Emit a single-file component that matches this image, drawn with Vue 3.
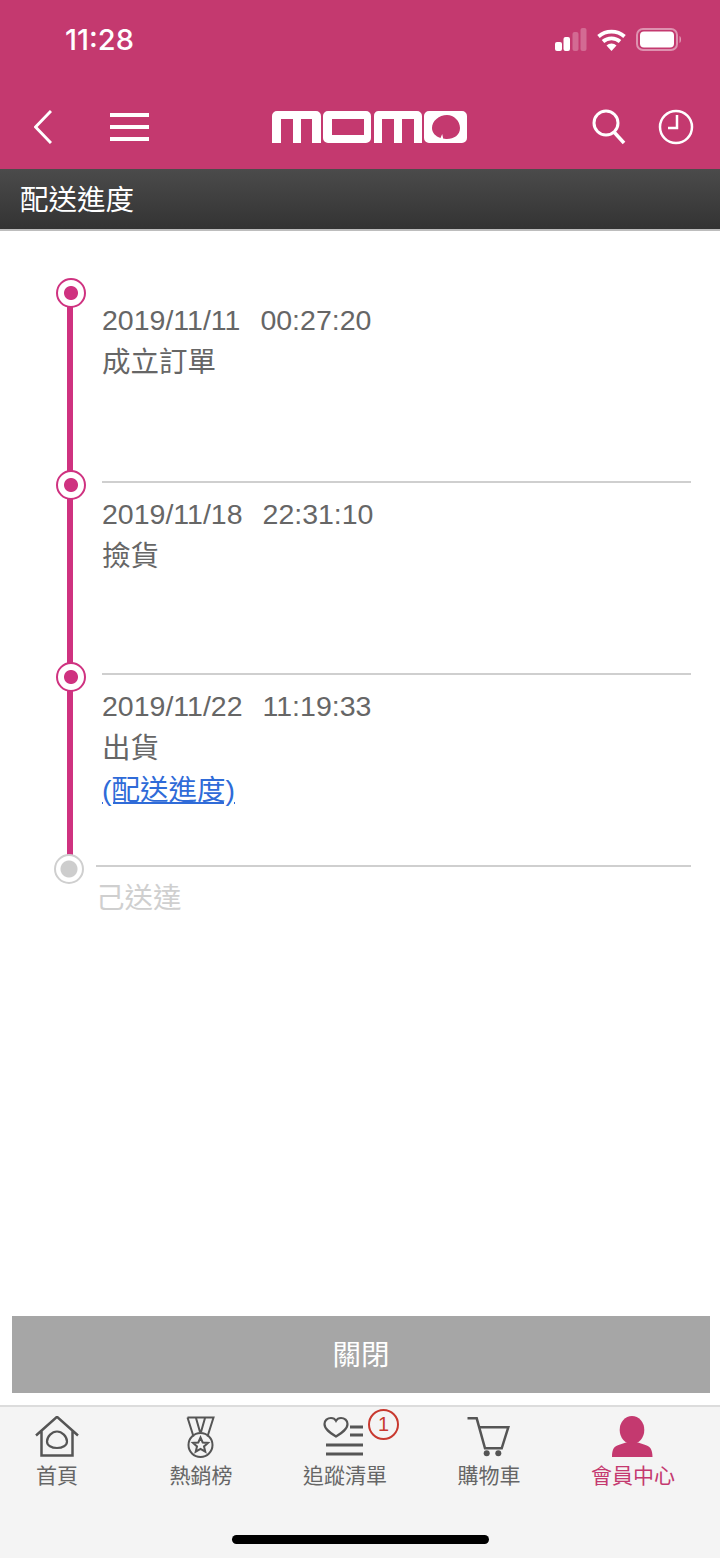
<template>
  <div class="page">
    <header class="top">
      <div class="status">
        <span class="clock">11:28</span>
        <svg class="status-icons" width="130" height="24" viewBox="0 0 130 24">
          <rect x="3" y="15" width="7" height="9" rx="2" fill="#fff" />
          <rect x="11.500" y="10" width="6.500" height="14" rx="2" fill="#fff" />
          <rect x="20.500" y="5" width="6" height="19" rx="2" fill="#fff" opacity="0.25" />
          <rect x="28.500" y="1" width="6" height="23" rx="2" fill="#fff" opacity="0.25" />
          <path d="M46.500 9.500a20 20 0 0 1 26 0M51 14.500a13 13 0 0 1 17 0" fill="none" stroke="#fff" stroke-width="3.800" />
          <path d="M59.500 24l-5-5.500a7.500 7.500 0 0 1 10 0z" fill="#fff" />
          <rect x="85" y="2" width="40" height="21" rx="6" fill="none" stroke="#fff" stroke-opacity="0.45" stroke-width="2" />
          <rect x="88" y="4.500" width="34" height="16" rx="4" fill="#fff" />
          <path d="M127.500 9c2 .5 2 6.500 0 7z" fill="#fff" opacity="0.5" />
        </svg>
      </div>
      <nav class="navbar">
        <svg class="ico-back" width="18" height="34" viewBox="0 0 18 34">
          <path d="M17 1L1.500 17 17 33" fill="none" stroke="#fff" stroke-width="3" />
        </svg>
        <div class="burger"><i></i><i></i><i></i></div>
        <svg class="logo" width="195" height="32" viewBox="0 0 195 32">
          <g fill="#fff" fill-rule="evenodd">
            <path d="M5 0h39a5 5 0 0 1 5 5v27h-9V8H29v24h-8V8H9v24H0V5a5 5 0 0 1 5-5z" />
            <path d="M56 0h38a5 5 0 0 1 5 5v22a5 5 0 0 1-5 5H56a5 5 0 0 1-5-5V5a5 5 0 0 1 5-5zM60 8v16h32V8z" />
            <path d="M106 0h39a5 5 0 0 1 5 5v27h-8V8h-12v24h-8V8h-12v24h-8V5a5 5 0 0 1 4-5z" />
            <path d="M157 0h33a5 5 0 0 1 5 5v22a5 5 0 0 1-5 5h-33a5 5 0 0 1-5-5V5a5 5 0 0 1 5-5zM175 4c7 0 13 6 13 13 0 7-6 11-13 11-1.500 0-3-.2-3.800-.5l-1-4.500-1.700 4c-5-1.500-8.500-5.500-8.500-10 0-7 7-13 15-13z" />
          </g>
        </svg>
        <svg class="ico-search" width="36" height="36" viewBox="0 0 36 36">
          <circle cx="15" cy="14" r="12" fill="none" stroke="#fff" stroke-width="3" />
          <path d="M23 23l10 11" fill="none" stroke="#fff" stroke-width="3.500" />
        </svg>
        <svg class="ico-clock" width="36" height="36" viewBox="0 0 36 36">
          <circle cx="18" cy="18" r="16" fill="none" stroke="#fff" stroke-width="2.500" />
          <path d="M19 6v13h-9" fill="none" stroke="#fff" stroke-width="2.500" />
        </svg>
      </nav>
    </header>

    <div class="title-bar">配送進度</div>

    <main class="content">
      <ul class="steps">
        <li v-for="(step, i) in steps" :key="i" class="step" :class="{ pending: !step.time }">
          <span class="mark"></span>
          <div class="step-body">
            <div v-if="step.time" class="stamp">
              <span>{{ step.date }}</span>
              <span class="time">{{ step.time }}</span>
            </div>
            <div class="label">{{ step.label }}</div>
            <a v-if="step.link" class="link" href="#">({{ step.link }})</a>
          </div>
        </li>
      </ul>
      <button class="close-btn">關閉</button>
    </main>

    <footer class="tabs">
      <div class="tab-row">
        <div class="tab">
          <svg width="46" height="42" viewBox="0 0 46 42">
            <path d="M2 19.500L23 .8l21 18.700M7.500 14.500V39.500h31V14.500" fill="none" stroke="#555" stroke-width="2.500" />
            <path d="M23 15.500c-5 0-10 5-10 10 0 4 4.500 6.500 10 6.500s10-2.500 10-6.500c0-5-5-10-10-10z" fill="none" stroke="#555" stroke-width="2.200" />
          </svg>
          <span>首頁</span>
        </div>
        <div class="tab">
          <svg width="46" height="42" viewBox="0 0 46 42">
            <path d="M9.500 1.500h26l-6 19M9.500 1.500l6 19M18 2l4 14M27 2l-4 14" fill="none" stroke="#555" stroke-width="2" />
            <circle cx="22.500" cy="29" r="12" fill="none" stroke="#555" stroke-width="2" />
            <path d="M22.500 21.500l2.200 5 5.300.4-4 3.500 1.300 5.300-4.800-2.800-4.800 2.800 1.300-5.300-4-3.500 5.300-.4z" fill="none" stroke="#555" stroke-width="2" />
          </svg>
          <span>熱銷榜</span>
        </div>
        <div class="tab">
          <svg width="46" height="42" viewBox="0 0 46 42">
            <path d="M14 20.500C7.500 16.500 2.500 13 2.500 8 2.500 4.500 5.500 2 9 2c2.200 0 4 1 5 2.800C15 3 16.800 2 19 2c3.500 0 6.500 2.500 6.500 6 0 5-5 8.500-11.500 12.500z" fill="none" stroke="#555" stroke-width="2.200" />
            <path d="M28 11h13M28 19h13M4 29h37M4 38h37" fill="none" stroke="#555" stroke-width="2.800" />
          </svg>
          <span>追蹤清單</span>
          <b class="badge">1</b>
        </div>
        <div class="tab">
          <svg width="46" height="42" viewBox="0 0 46 42">
            <path d="M1.500 2.300h9.200l8.300 30h16.700l6.600-21H12.300" fill="none" stroke="#555" stroke-width="2.500" />
            <circle cx="20.700" cy="37.300" r="3" fill="#555" />
            <circle cx="32.300" cy="37.300" r="3" fill="#555" />
          </svg>
          <span>購物車</span>
        </div>
        <div class="tab active">
          <svg width="46" height="42" viewBox="0 0 46 42">
            <ellipse cx="22" cy="14" rx="12.300" ry="14" fill="#c4396f" />
            <path d="M2 41c0-8 2-11 8-12.500l6-2h12l6 2c6 1.500 8.500 4.500 8.500 12.500z" fill="#c4396f" />
          </svg>
          <span>會員中心</span>
        </div>
      </div>
      <div class="home-bar"></div>
    </footer>
  </div>
</template>

<script setup>
const steps = [
  { date: '2019/11/11', time: '00:27:20', label: '成立訂單' },
  { date: '2019/11/18', time: '22:31:10', label: '撿貨' },
  { date: '2019/11/22', time: '11:19:33', label: '出貨', link: '配送進度' },
  { label: '己送達' }
]
</script>

<style>
html,
body {
  margin: 0;
  background: #fff;
}
</style>

<style scoped>
.page {
  display: flex;
  flex-direction: column;
  width: 720px;
  height: 1558px;
  overflow: hidden;
  font-family: "Liberation Sans", "Noto Sans CJK TC", sans-serif;
}

.top {
  height: 169px;
  flex: none;
  background: #c4396f;
  color: #fff;
}

.status {
  display: flex;
  justify-content: space-between;
  align-items: center;
  height: 78px;
  padding: 0 38px 0 65px;
}

.clock {
  font-family: Inter, sans-serif;
  font-size: 29px;
  font-weight: 500;
}

.navbar {
  display: flex;
  align-items: center;
  height: 98px;
  padding-left: 34px;
}

.ico-back {
  flex: none;
}

.burger {
  display: flex;
  flex-direction: column;
  gap: 8px;
  width: 39px;
  margin-left: 58px;
}

.burger i {
  display: block;
  height: 4px;
  background: #fff;
}

.logo {
  margin-left: 123px;
}

.ico-search {
  margin-left: 124px;
}

.ico-clock {
  margin-left: 31px;
}

.title-bar {
  height: 60px;
  flex: none;
  line-height: 62px;
  padding-left: 20px;
  font-size: 28.500px;
  color: #fff;
  background: linear-gradient(#4b4b4b, #333);
  border-bottom: 2px solid #bdbdbd;
}

.content {
  flex: 1;
  display: flex;
  flex-direction: column;
  justify-content: space-between;
  padding: 0 10px 12px 12px;
}

.steps {
  list-style: none;
  margin: 0;
  padding: 0;
}

.step {
  position: relative;
  height: 192px;
  padding-left: 90px;
}

.step:first-child {
  height: 250px;
  padding-top: 59px;
  box-sizing: border-box;
}

.step-body {
  height: 100%;
  box-sizing: border-box;
  padding-top: 10px;
  border-top: 2px solid #cfcfcf;
  margin-right: 19px;
}

.step:first-child .step-body {
  border-top: none;
  padding-top: 9px;
}

.mark {
  position: absolute;
  left: 44px;
  top: -11px;
  width: 30px;
  height: 30px;
  box-sizing: border-box;
  border: 2px solid #cf3280;
  border-radius: 50%;
  background: radial-gradient(circle, #cf3280 6.500px, #fff 7.500px);
  z-index: 1;
}

.step:first-child .mark {
  top: 47px;
}

/* rail between the dots */
.step::before {
  content: "";
  position: absolute;
  left: 55px;
  top: 0;
  bottom: 0;
  width: 6px;
  background: #cf3280;
}

.step:first-child::before {
  top: 59px;
}

.step.pending {
  height: auto;
  padding-left: 84px;
}

.step.pending::before {
  display: none;
}

.step.pending .mark {
  left: 42px;
  border-color: #cfcfcf;
  background: radial-gradient(circle, #cdcdcd 8px, #fff 9px);
}

.step.pending .step-body {
  padding-top: 10px;
}

.step.pending .label {
  color: #cfcfcf;
}

.stamp {
  display: flex;
  font-size: 28.500px;
  line-height: 42px;
  color: #666;
}

.time {
  margin-left: 20px;
}

.label {
  font-size: 28.500px;
  line-height: 43px;
  color: #666;
}

.link {
  display: inline-block;
  font-size: 28.500px;
  line-height: 41px;
  color: #2f6bd8;
}

.close-btn {
  display: block;
  height: 77px;
  width: 698px;
  border: none;
  padding: 0 0 4px;
  background: #a6a6a6;
  color: #fff;
  font: inherit;
  font-size: 28.500px;
}

.tabs {
  position: relative;
  height: 153px;
  flex: none;
  box-sizing: border-box;
  border-top: 2px solid #dcdcdc;
  background: #f4f4f4;
  padding-top: 9px;
}

.tab-row {
  display: grid;
  grid-template-columns: repeat(5, 144px);
  margin-left: -15px;
}

.tab {
  position: relative;
  display: flex;
  flex-direction: column;
  align-items: center;
  font-size: 21px;
  line-height: 36px;
  color: #666;
}

.tab.active {
  color: #c4396f;
}

.badge {
  position: absolute;
  left: 95px;
  top: -7px;
  width: 27px;
  height: 27px;
  border: 2px solid #c8392f;
  border-radius: 50%;
  font-family: "Liberation Sans", sans-serif;
  font-size: 20px;
  font-weight: 400;
  line-height: 27px;
  text-align: center;
  color: #c8392f;
}

.home-bar {
  position: absolute;
  left: 232px;
  bottom: 14px;
  width: 257px;
  height: 9px;
  border-radius: 5px;
  background: #000;
}
</style>
